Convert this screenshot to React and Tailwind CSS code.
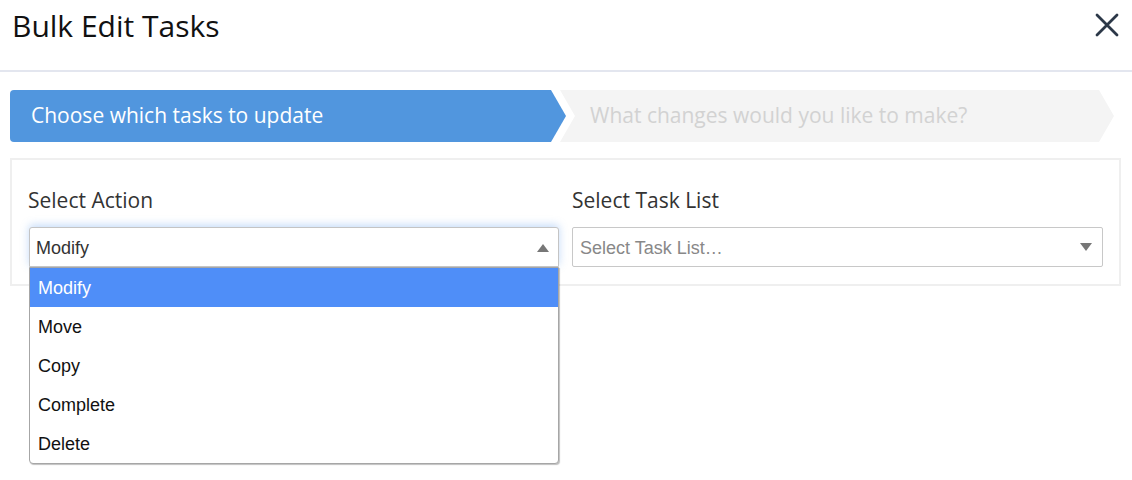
import React from "react";

export default function App() {
  const items = ["Modify", "Move", "Copy", "Complete", "Delete"];
  return (
    <div className="w-[1132px] h-[480px] bg-white overflow-hidden font-['Open_Sans',sans-serif] text-[#222]">
      {/* Header */}
      <div className="h-[72px] flex items-center justify-between pl-[12px] pr-[12px] border-b-2 border-[#e3e6ef]">
        <h1 className="text-[30px] leading-none text-[#111] -mt-[18px]">Bulk Edit Tasks</h1>
        <svg width="24" height="24" viewBox="0 0 24 24" className="-mt-[20px] mr-[1px]">
          <path d="M2 2 L22 22 M22 2 L2 22" stroke="#2c3848" strokeWidth="2.8" strokeLinecap="round" />
        </svg>
      </div>

      <div className="px-[10px] pt-[18px]">
        {/* Steps */}
        <div className="flex h-[52px]">
          <div className="w-[556px] h-full bg-[#5196de] rounded-l-[4px] flex items-center pl-[21px] text-white text-[21px] [clip-path:polygon(0_0,calc(100%-15px)_0,100%_50%,calc(100%-15px)_100%,0_100%)]">
            Choose which tasks to update
          </div>
          <div className="w-[554px] -ml-[6px] h-full bg-[#f4f4f4] flex items-center pl-[30px] text-[#d2d2d2] text-[21px] [clip-path:polygon(0_0,calc(100%-15px)_0,100%_50%,calc(100%-15px)_100%,0_100%,15px_50%)]">
            What changes would you like to make?
          </div>
        </div>

        {/* Panel */}
        <div className="mt-[16px] w-[1111px] border-2 border-[#efefef] px-[16px] pt-[26px] pb-[17px] grid grid-cols-2 gap-[13px]">
          <div className="relative">
            <div className="text-[21px] leading-[28px] text-[#333]">Select Action</div>
            <div className="mt-[13px] ml-[1px] h-[40px] border border-[#c4c4c4] rounded-t-[3px] flex items-center justify-between pl-[6px] pr-[6px] pt-[3px] bg-white shadow-[0_-2px_8px_rgba(82,150,236,0.35)] font-['Liberation_Sans',Arial,sans-serif] text-[18px] text-[#333]">
              <span>Modify</span>
              <svg width="12" height="8" viewBox="0 0 12 8" className="mr-[3px] -mt-[2px]">
                <path d="M0 8 L6 0 L12 8 Z" fill="#777" />
              </svg>
            </div>
            <div className="absolute left-[1px] right-0 top-[81px] bg-white border border-[#a6a6a6] rounded-b-[4px] shadow-[1px_1px_1px_rgba(0,0,0,0.25)] font-['Liberation_Sans',Arial,sans-serif] text-[18px] text-[#111] z-10">
              {items.map((it, i) => (
                <div
                  key={it}
                  className={
                    i === 0
                      ? "h-[39px] flex items-center pl-[8px] pt-[1px] bg-[#4f8ef8] text-white"
                      : "h-[39px] flex items-center pl-[8px] pt-[1px]"
                  }
                >
                  {it}
                </div>
              ))}
            </div>
          </div>
          <div>
            <div className="text-[21px] leading-[28px] text-[#333]">Select Task List</div>
            <div className="mt-[13px] h-[40px] border border-[#c8c8c8] rounded-[2px] flex items-center justify-between pl-[7px] pr-[7px] pt-[3px] bg-white font-['Liberation_Sans',Arial,sans-serif] text-[18px] text-[#888]">
              <span>Select Task List…</span>
              <svg width="12" height="8" viewBox="0 0 12 8" className="mr-[3px] -mt-[4px]">
                <path d="M0 0 L6 8 L12 0 Z" fill="#777" />
              </svg>
            </div>
          </div>
        </div>
      </div>
    </div>
  );
}
